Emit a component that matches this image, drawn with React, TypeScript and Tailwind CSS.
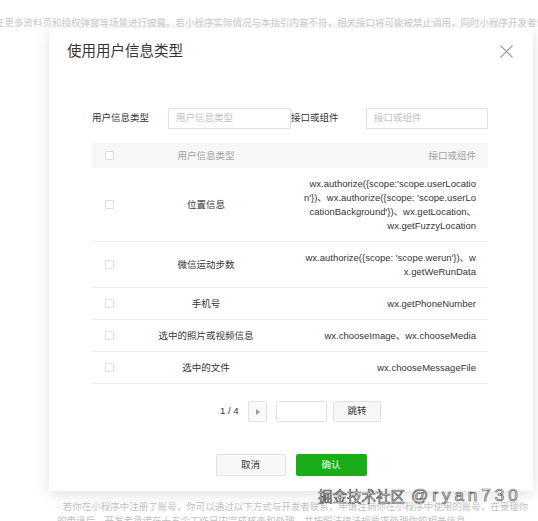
import React from "react";

const font = "font-['Liberation_Sans','Noto_Sans_CJK_SC',sans-serif]";

const rows = [
  {
    name: "位置信息",
    api: "wx.authorize({scope:'scope.userLocation'})、wx.authorize({scope: 'scope.userLocationBackground'})、wx.getLocation、wx.getFuzzyLocation",
  },
  { name: "微信运动步数", api: "wx.authorize({scope: 'scope.werun'})、wx.getWeRunData" },
  { name: "手机号", api: "wx.getPhoneNumber" },
  { name: "选中的照片或视频信息", api: "wx.chooseImage、wx.chooseMedia" },
  { name: "选中的文件", api: "wx.chooseMessageFile" },
];

const Checkbox: React.FC = () => (
  <span className="block w-[9px] h-[9px] border border-[#dcdcdc] rounded-[1px] bg-white" />
);

const App: React.FC = () => {
  return (
    <div className={`relative w-[538px] h-[521px] overflow-hidden bg-white ${font}`}>
      {/* page text behind the dialog */}
      <div className="h-[28px] pt-[16px] text-[9.5px] leading-[13px] text-[#c9c9c9] whitespace-nowrap overflow-hidden indent-[-5px]">
        在更多资料页和授权弹窗等场景进行披露。若小程序实际情况与本指引内容不符，相关接口将可能被禁止调用，同时小程序开发者需承担相应责任。
      </div>

      {/* dialog */}
      <div className="ml-[49px] w-[484px] h-[463px] bg-white shadow-[0_3px_14px_rgba(0,0,0,0.13)] flex flex-col">
        <div className="flex items-center justify-between pt-[13px] pl-[18px] pr-[20px] h-[33px]">
          <span className="text-[14.5px] leading-[20px] text-[#353535]">使用用户信息类型</span>
          <svg width="13" height="13" viewBox="0 0 13 13" className="text-[#9a9a9a]">
            <path d="M0.5 0.5 L12.5 12.5 M12.5 0.5 L0.5 12.5" stroke="currentColor" strokeWidth="1.1" fill="none" />
          </svg>
        </div>

        {/* filters */}
        <div className="mt-[47px] ml-[43px] flex items-center h-[21px] text-[9.5px] text-[#353535]">
          <span className="w-[76px]">用户信息类型</span>
          <div className="w-[123px] h-[21px] border border-[#e2e2e2] flex items-center pl-[7px] text-[#c2c2c2]">
            用户信息类型
          </div>
          <span className="w-[75px]">接口或组件</span>
          <div className="w-[122px] h-[21px] border border-[#e2e2e2] flex items-center pl-[7px] text-[#c2c2c2]">
            接口或组件
          </div>
        </div>

        {/* table */}
        <div className="mt-[14px] ml-[43px] w-[396px] text-[9.5px] leading-[14px] text-[#353535]">
          <div className="flex items-center h-[25px] bg-[#f7f7f7] text-[#a3a3a3]">
            <div className="w-[30px] pl-[13px]">
              <Checkbox />
            </div>
            <div className="w-[168px] text-center">用户信息类型</div>
            <div className="flex-1 text-right pr-[12px]">接口或组件</div>
          </div>
          {rows.map((row) => (
            <div key={row.name} className="flex items-center py-[8.5px] border-b border-[#ececec]">
              <div className="w-[30px] pl-[13px]">
                <Checkbox />
              </div>
              <div className="w-[168px] text-center">{row.name}</div>
              <div className="flex-1 flex justify-end pr-[12px]">
                <div className="w-[173px] text-right break-all">{row.api}</div>
              </div>
            </div>
          ))}
        </div>

        {/* pagination */}
        <div className="mt-[17px] ml-[171px] flex items-center h-[21px] text-[9.5px] text-[#353535]">
          <span className="w-[28px]">1 / 4</span>
          <div className="w-[19px] h-[21px] border border-[#e2e2e2] rounded-[2px] bg-[#f9f9f9] flex items-center justify-center">
            <svg width="4" height="6" viewBox="0 0 4 6">
              <path d="M0 0 L4 3 L0 6 Z" fill="#9c9c9c" />
            </svg>
          </div>
          <div className="ml-[9px] w-[51px] h-[21px] border border-[#e2e2e2] rounded-[2px]" />
          <div className="ml-[6px] w-[48px] h-[21px] border border-[#e2e2e2] rounded-[2px] bg-[#f7f7f7] flex items-center justify-center">
            跳转
          </div>
        </div>

        {/* actions */}
        <div className="mt-[32px] flex justify-center gap-[10px] text-[9.5px]">
          <button className="w-[70px] h-[22px] border border-[#e2e2e2] rounded-[2px] bg-[#f8f8f8] text-[#353535]">
            取消
          </button>
          <button className="w-[71px] h-[22px] rounded-[2px] bg-[#1aad19] text-[#eaffea]">确认</button>
        </div>
      </div>

      {/* page text below the dialog */}
      <div className="mt-[9px] pl-[57px] text-[9.5px] leading-[14px] text-[#c2c2c2] whitespace-nowrap">
        <p>· 若你在小程序中注册了账号，你可以通过以下方式与开发者联系，申请注销你在小程序中使用的账号，在受理你</p>
        <p>的申请后，开发者承诺在十五个工作日内完成核查和处理，并按照法律法规要求处理你的相关信息。</p>
      </div>

      {/* watermark */}
      <div className="absolute left-[318px] top-[486px] flex items-center gap-[6px] text-white [-webkit-text-stroke:0.7px_#5a5a5a] whitespace-nowrap">
        <span className="text-[14.5px] leading-[20px] font-['Noto_Sans_CJK_SC',sans-serif]">掘金技术社区</span>
        <span className="text-[17px] leading-[20px] tracking-[4px] font-['Liberation_Sans',sans-serif]">@ryan730</span>
      </div>
    </div>
  );
};

export default App;
